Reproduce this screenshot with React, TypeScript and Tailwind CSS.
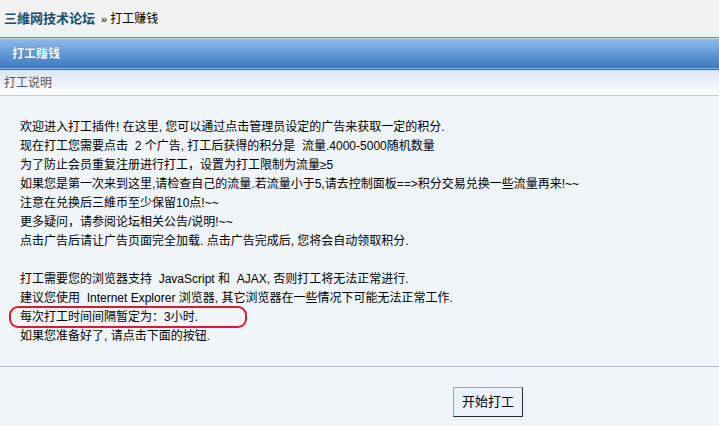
import React from "react";

const font = { fontFamily: '"Liberation Sans", Arial, "Noto Sans CJK SC", sans-serif' };

export default function App() {
  const lines1 = [
    "欢迎进入打工插件! 在这里, 您可以通过点击管理员设定的广告来获取一定的积分.",
    "现在打工您需要点击  2 个广告, 打工后获得的积分是  流量.4000-5000随机数量",
    "为了防止会员重复注册进行打工，设置为打工限制为流量≥5",
    "如果您是第一次来到这里,请检查自己的流量.若流量小于5,请去控制面板==>积分交易兑换一些流量再来!~~",
    "注意在兑换后三維币至少保留10点!~~",
    "更多疑问，请参阅论坛相关公告/说明!~~",
    "点击广告后请让广告页面完全加载. 点击广告完成后, 您将会自动领取积分.",
  ];
  return (
    <div className="w-[719px] h-[426px] bg-[#f0f5fa] text-black overflow-hidden" style={font}>
      <div className="h-[37px] bg-[#f2f2f2] flex items-center pl-[4px] pt-[1px]">
        <span className="text-[13px] font-bold text-[#17506e]">三維网技术论坛</span>
        <span className="text-[11px] ml-[6px] mr-[3px]">»</span>
        <span className="text-[12px]">打工赚钱</span>
      </div>
      <div className="border-t border-[#5f8fc8]">
        <div className="h-[1px] bg-[#c4daf4]" />
        <div className="h-[29px] bg-gradient-to-b from-[#91b9e9] via-[#6298d6] to-[#3f78c1] flex items-center pl-[12px]">
          <span className="text-[12px] font-bold text-white [text-shadow:0_0_1px_#2b5c9a]">打工赚钱</span>
        </div>
        <div className="h-[1px] bg-[#8ab6ea]" />
        <div className="h-[1px] bg-[#3d6cab]" />
      </div>
      <div className="h-[26px] bg-gradient-to-b from-[#dae4f3] to-white flex items-center pl-[4px] border-b border-[#c3cdd8]">
        <span className="text-[12px] text-[#555]">打工说明</span>
      </div>
      <div className="bg-[#f0f5fa] px-[20px] pt-[22px] pb-[20px] text-[12px] leading-[19px] border-b border-[#b2bfcd]">
        {lines1.map((l, i) => (
          <div key={i} className="whitespace-pre">{l}</div>
        ))}
        <div className="h-[19px]" />
        <div className="whitespace-pre">打工需要您的浏览器支持  JavaScript 和  AJAX, 否则打工将无法正常进行.</div>
        <div className="whitespace-pre">建议您使用  Internet Explorer 浏览器, 其它浏览器在一些情况下可能无法正常工作.</div>
        <div className="relative whitespace-pre">
          每次打工时间间隔暂定为：3小时.
          <div className="absolute left-[-11px] top-[-2px] w-[238px] h-[22px] border-2 border-[#d11f2c] rounded-[9px]" />
        </div>
        <div className="whitespace-pre">如果您准备好了, 请点击下面的按钮.</div>
      </div>
      <div className="pt-[20px] pl-[453px]">
        <button className="w-[70px] h-[30px] bg-[#eaf2fc] border border-t-[#9aa6b6] border-l-[#9aa6b6] border-r-[#2a2a2a] border-b-[#2a2a2a] text-[13px] text-black">
          开始打工
        </button>
      </div>
    </div>
  );
}
